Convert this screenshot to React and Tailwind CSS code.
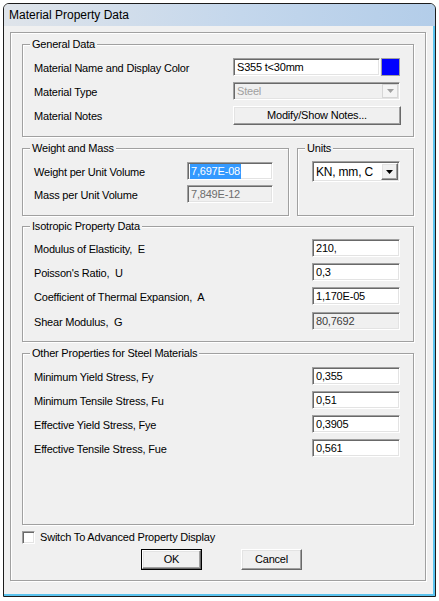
import React from 'react';

const sunken =
  'border border-t-[#a0a0a0] border-l-[#a0a0a0] border-r-white border-b-white shadow-[inset_1px_1px_0_#696969,inset_-1px_-1px_0_#e3e3e3]';
const raised =
  'border border-t-white border-l-white border-r-[#696969] border-b-[#696969] shadow-[inset_-1px_-1px_0_#a0a0a0,inset_1px_1px_0_#e3e3e3] bg-[#f0f0f0]';

function Group({ title, className, children }) {
  return (
    <div className={`relative border border-[#a0a0a0] shadow-[inset_1px_1px_0_#fff,1px_1px_0_#fff] ${className}`}>
      <span className="absolute -top-[7px] left-[7px] bg-[#f0f0f0] px-[2px] leading-[13px]">{title}</span>
      {children}
    </div>
  );
}

function Field({ value, disabled, className = '' }) {
  return (
    <div
      className={`${sunken} h-[18px] flex items-center pl-[3px] ${
        disabled ? 'bg-[#f0f0f0] text-[#6d6d6d]' : 'bg-white text-black'
      } ${className}`}
    >
      {value}
    </div>
  );
}

function Arrow({ color }) {
  return (
    <svg width="7" height="4" viewBox="0 0 7 4">
      <path d="M0 0h7L3.5 4z" fill={color} />
    </svg>
  );
}

function Row({ label, labelW, children }) {
  return (
    <div className="flex items-center h-[18px]">
      <div className={`${labelW} shrink-0 whitespace-pre pt-[2px]`}>{label}</div>
      {children}
    </div>
  );
}

export default function App() {
  const iso = [
    ['Modulus of Elasticity,  E', '210,'],
    ["Poisson's Ratio,  U", '0,3'],
    ['Coefficient of Thermal Expansion,  A', '1,170E-05'],
  ];
  const steel = [
    ['Minimum Yield Stress, Fy', '0,355'],
    ['Minimum Tensile Stress, Fu', '0,51'],
    ['Effective Yield Stress, Fye', '0,3905'],
    ['Effective Tensile Stress, Fue', '0,561'],
  ];

  return (
    <div
      className="min-h-screen bg-white p-[3px] text-[11px] tracking-[-0.2px] text-black"
      style={{ fontFamily: '"Liberation Sans", Arial, sans-serif' }}
    >
      <div className="w-[433px] h-[594px] border border-[#1c1c1c] rounded-t-[6px] overflow-hidden bg-[#f0f0f0] flex flex-col shadow-[inset_-2px_-2px_0_#5bc3ee]">
        <div className="h-[22px] shrink-0 flex items-center pl-[5px] text-[12px] tracking-normal bg-[linear-gradient(to_right,#dfe4ea,#c4d7ec_55%,#b3cde9)]">
          Material Property Data
        </div>

        <div className="pt-[6px] pl-[6px]">
          <div className="w-[416px] border border-[#a0a0a0] shadow-[inset_1px_1px_0_#fff,1px_1px_0_#fff] pt-[11px] pl-[11px] pb-[10px]">
            <Group title="General Data" className="w-[392px] h-[93px] pt-[13px] pl-[11px]">
              <div className="flex flex-col gap-[6px]">
                <Row label="Material Name and Display Color" labelW="w-[199px]">
                  <Field value="S355 t<30mm" className="w-[147px]" />
                  <div className="ml-[1px] w-[19px] h-[18px] bg-[#0000ff] border border-[#a0a0a0]" />
                </Row>
                <Row label="Material Type" labelW="w-[199px]">
                  <div className={`${sunken} w-[167px] h-[18px] bg-[#f0f0f0] flex items-center pl-[3px] text-[#a0a0a0]`}>
                    <span className="flex-1">Steel</span>
                    <div className="w-[16px] h-[14px] mr-[1px] flex items-center justify-center border border-[#d6d6d6] bg-[#f4f4f4]">
                      <Arrow color="#a0a0a0" />
                    </div>
                  </div>
                </Row>
                <Row label="Material Notes" labelW="w-[199px]">
                  <div className={`${raised} w-[168px] h-[19px] flex items-center justify-center`}>Modify/Show Notes...</div>
                </Row>
              </div>
            </Group>

            <div className="flex mt-[11px]">
              <Group title="Weight and Mass" className="w-[267px] h-[68px] pt-[13px] pl-[11px]">
                <div className="flex flex-col gap-[5px]">
                  <Row label="Weight per Unit Volume" labelW="w-[153px]">
                    <div className={`${sunken} w-[86px] h-[18px] bg-white flex items-center pl-[2px]`}>
                      <span className="bg-[#3399ff] text-white leading-[15px] px-[1px]">7,697E-08</span>
                    </div>
                  </Row>
                  <Row label="Mass per Unit Volume" labelW="w-[153px]">
                    <Field value="7,849E-12" disabled className="w-[86px]" />
                  </Row>
                </div>
              </Group>
              <Group title="Units" className="ml-[8px] w-[117px] h-[68px] pt-[12px] pl-[14px]">
                <div className={`${sunken} w-[88px] h-[21px] bg-white flex items-center pl-[3px] text-[12px]`}>
                  <span className="flex-1">KN, mm, C</span>
                  <div className={`${raised} w-[17px] h-[17px] mr-[1px] flex items-center justify-center`}>
                    <Arrow color="#000" />
                  </div>
                </div>
              </Group>
            </div>

            <Group title="Isotropic Property Data" className="mt-[10px] w-[392px] h-[116px] pt-[12px] pl-[11px]">
              <div className="flex flex-col gap-[6px]">
                {iso.map(([l, v]) => (
                  <Row key={l} label={l} labelW="w-[278px]">
                    <Field value={v} className="w-[88px]" />
                  </Row>
                ))}
                <div className="mt-[1px]">
                  <Row label="Shear Modulus,  G" labelW="w-[278px]">
                    <Field value="80,7692" disabled className="w-[88px] !text-[#3c3c3c]" />
                  </Row>
                </div>
              </div>
            </Group>

            <Group title="Other Properties for Steel Materials" className="mt-[11px] w-[392px] h-[172px] pt-[13px] pl-[11px]">
              <div className="flex flex-col gap-[6px]">
                {steel.map(([l, v]) => (
                  <Row key={l} label={l} labelW="w-[278px]">
                    <Field value={v} className="w-[88px]" />
                  </Row>
                ))}
              </div>
            </Group>

            <div className="mt-[6px] h-[13px] flex items-center">
              <div className={`${sunken} w-[13px] h-[13px] bg-white`} />
              <span className="ml-[5px]">Switch To Advanced Property Display</span>
            </div>

            <div className="mt-[5px] flex pl-[119px]">
              <div className="border border-black w-[61px] h-[21px]">
                <div className={`${raised} w-full h-full flex items-center justify-center`}>OK</div>
              </div>
              <div className={`${raised} ml-[39px] w-[61px] h-[21px] flex items-center justify-center`}>Cancel</div>
            </div>
          </div>
        </div>
      </div>
    </div>
  );
}
